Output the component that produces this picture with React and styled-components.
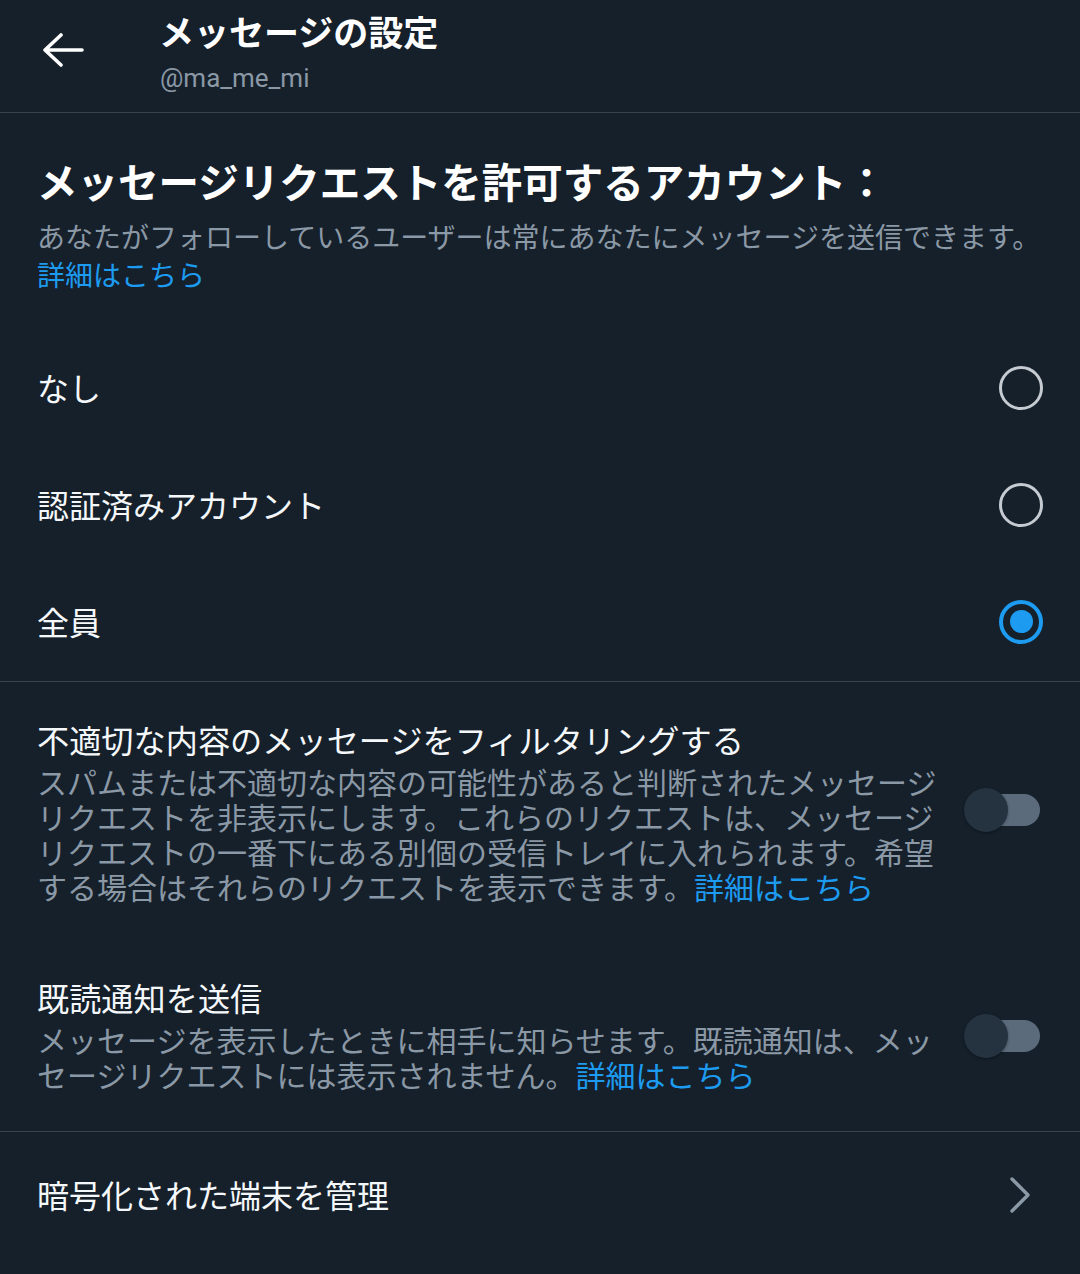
import React from "react";
import styled, { createGlobalStyle } from "styled-components";

const GlobalStyle = createGlobalStyle`
  html, body {
    margin: 0;
    padding: 0;
    background: #15202b;
  }
  body {
    font-family: Roboto, "Noto Sans CJK JP", "Noto Sans", sans-serif;
    color: #f5f8fa;
    -webkit-font-smoothing: antialiased;
    text-spacing-trim: space-all;
  }
`;

const Page = styled.div`
  width: 1080px;
  min-height: 1274px;
  background: #15202b;
`;

const Header = styled.header`
  display: flex;
  align-items: flex-start;
  height: 113px;
  box-sizing: border-box;
  padding: 13px 0 0 42px;
  border-bottom: 1px solid #38444d;
`;

const BackButton = styled.div`
  width: 42px;
  height: 40px;
  margin-top: 17px;
  margin-right: 75px;
  display: flex;
  align-items: center;
  justify-content: center;
`;

const TitleBlock = styled.div`
  display: flex;
  flex-direction: column;
`;

const Title = styled.div`
  font-size: 35px;
  font-weight: 700;
  line-height: 44px;
  color: #ffffff;
`;

const Subtitle = styled.div`
  font-size: 26px;
  line-height: 42px;
  color: #8b98a5;
  margin-left: 1px;
`;

const Section = styled.section`
  padding: ${(p) => p.$pad || "0 37px"};
  border-bottom: ${(p) => (p.$divider ? "1px solid #38444d" : "none")};
`;

const Heading = styled.h2`
  margin: 0;
  font-size: 40.5px;
  font-weight: 700;
  line-height: 56px;
  color: #ffffff;
  white-space: nowrap;
`;

const Description = styled.p`
  margin: 8px 0 0;
  font-size: 28px;
  line-height: 38px;
  color: #8b98a5;
  white-space: nowrap;
`;

const Link = styled.a`
  color: #1d9bf0;
  text-decoration: none;
`;

const RadioList = styled.div`
  margin-top: 33px;
  display: flex;
  flex-direction: column;
`;

const RadioRow = styled.div`
  height: 117px;
  display: flex;
  align-items: center;
  justify-content: space-between;
`;

const Label = styled.div`
  font-size: 32px;
  line-height: 44px;
  padding-top: 4px;
  color: #f5f8fa;
`;

const Radio = styled.div`
  width: 44px;
  height: 44px;
  box-sizing: border-box;
  border-radius: 50%;
  border: ${(p) => (p.$checked ? "4px solid #1d9bf0" : "3px solid #c5cbd1")};
  display: flex;
  align-items: center;
  justify-content: center;
  &::after {
    content: "";
    display: ${(p) => (p.$checked ? "block" : "none")};
    width: 23px;
    height: 23px;
    border-radius: 50%;
    background: #1d9bf0;
  }
`;

const ToggleItem = styled.div`
  display: flex;
  align-items: center;
  justify-content: space-between;
  margin-top: ${(p) => p.$top || "0"};
`;

const ToggleText = styled.div`
  display: flex;
  flex-direction: column;
`;

const ItemTitle = styled.div`
  font-size: 32.2px;
  line-height: 44px;
  color: #f5f8fa;
  white-space: nowrap;
`;

const ItemDesc = styled.div`
  margin-top: 2px;
  font-size: 30px;
  line-height: 35px;
  color: #8b98a5;
  white-space: nowrap;
`;

const Line = styled.span`
  display: block;
`;

const Toggle = styled.div`
  position: relative;
  flex: none;
  width: 76px;
  height: 44px;
  margin-right: 3px;
  margin-bottom: ${(p) => p.$lift || "0"};
`;

const Track = styled.div`
  position: absolute;
  right: 0;
  top: 6px;
  width: 58px;
  height: 32px;
  border-radius: 16px;
  background: #5b6b7c;
`;

const Knob = styled.div`
  position: absolute;
  left: 0;
  top: 0;
  width: 44px;
  height: 44px;
  border-radius: 50%;
  background: #253341;
  box-shadow: 0 1px 3px rgba(0, 0, 0, 0.35);
`;

const NavRow = styled.div`
  height: 126px;
  display: flex;
  align-items: center;
  justify-content: space-between;
  padding: 0 48px 0 37px;
`;

const BackArrow = () => (
  <svg width="42" height="34" viewBox="0 0 42 34" fill="none">
    <path
      d="M40 17H4M19 2L3 17l16 15"
      stroke="#ffffff"
      strokeWidth="3.6"
      strokeLinecap="round"
      strokeLinejoin="round"
    />
  </svg>
);

const Chevron = () => (
  <svg width="24" height="38" viewBox="0 0 24 38" fill="none">
    <path
      d="M4 3l16 16L4 35"
      stroke="#8b98a5"
      strokeWidth="3.4"
      strokeLinecap="round"
      strokeLinejoin="round"
    />
  </svg>
);

const options = [
  { label: "なし", checked: false },
  { label: "認証済みアカウント", checked: false },
  { label: "全員", checked: true },
];

export default function App() {
  return (
    <>
      <GlobalStyle />
      <Page>
        <Header>
          <BackButton>
            <BackArrow />
          </BackButton>
          <TitleBlock>
            <Title>メッセージの設定</Title>
            <Subtitle>@ma_me_mi</Subtitle>
          </TitleBlock>
        </Header>

        <Section $pad="43px 37px 1px" $divider>
          <Heading>メッセージリクエストを許可するアカウント：</Heading>
          <Description>
            あなたがフォローしているユーザーは常にあなたにメッセージを送信できます。
            <br />
            <Link>詳細はこちら</Link>
          </Description>
          <RadioList>
            {options.map((o) => (
              <RadioRow key={o.label}>
                <Label>{o.label}</Label>
                <Radio $checked={o.checked} />
              </RadioRow>
            ))}
          </RadioList>
        </Section>

        <Section $pad="38px 37px 37px" $divider>
          <ToggleItem>
            <ToggleText>
              <ItemTitle>不適切な内容のメッセージをフィルタリングする</ItemTitle>
              <ItemDesc>
                <Line>スパムまたは不適切な内容の可能性があると判断されたメッセージ</Line>
                <Line>リクエストを非表示にします。これらのリクエストは、メッセージ</Line>
                <Line>リクエストの一番下にある別個の受信トレイに入れられます。希望</Line>
                <Line>
                  する場合はそれらのリクエストを表示できます。<Link>詳細はこちら</Link>
                </Line>
              </ItemDesc>
            </ToggleText>
            <Toggle $lift="6px">
              <Track />
              <Knob />
            </Toggle>
          </ToggleItem>

          <ToggleItem $top="72px">
            <ToggleText>
              <ItemTitle>既読通知を送信</ItemTitle>
              <ItemDesc>
                <Line>メッセージを表示したときに相手に知らせます。既読通知は、メッ</Line>
                <Line>
                  セージリクエストには表示されません。<Link>詳細はこちら</Link>
                </Line>
              </ItemDesc>
            </ToggleText>
            <Toggle>
              <Track />
              <Knob />
            </Toggle>
          </ToggleItem>
        </Section>

        <NavRow>
          <Label>暗号化された端末を管理</Label>
          <Chevron />
        </NavRow>
      </Page>
    </>
  );
}
